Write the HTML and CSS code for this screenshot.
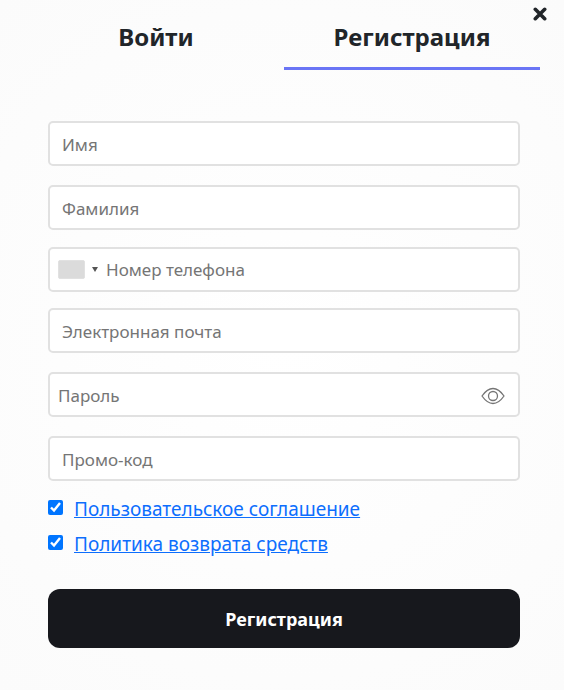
FILE: index.html
```
<!DOCTYPE html>
<html lang="ru">
<head>
    <meta charset="UTF-8">
    <meta name="viewport" content="width=device-width, initial-scale=1.0">
    <title>Регистрация</title>
    <link rel="stylesheet" href="styles.css">
</head>
<body>

<main class="modal">
    <button type="button" class="close-btn" aria-label="Закрыть">
        <svg viewBox="0 0 14 14" width="14" height="14">
            <path d="M2.3 2.3 L11.7 11.7 M11.7 2.3 L2.3 11.7"/>
        </svg>
    </button>

    <div class="tabs">
        <button type="button" class="tab">Войти</button>
        <button type="button" class="tab active">Регистрация</button>
    </div>

    <form class="register-form">
        <input type="text" class="field" name="name" placeholder="Имя" aria-label="Имя">
        <input type="text" class="field" name="surname" placeholder="Фамилия" aria-label="Фамилия">

        <div class="field phone-field">
            <button type="button" class="country-btn" aria-label="Код страны">
                <span class="flag"></span>
                <span class="arrow"></span>
            </button>
            <input type="tel" class="inner-input" name="phone" placeholder="Номер телефона" aria-label="Номер телефона">
        </div>

        <input type="email" class="field email-field" name="email" placeholder="Электронная почта" aria-label="Электронная почта">

        <div class="field password-field">
            <input type="password" class="inner-input" name="password" placeholder="Пароль" aria-label="Пароль">
            <button type="button" class="eye-btn" aria-label="Показать пароль">
                <svg viewBox="0 0 24 18" width="24" height="18">
                    <path d="M1 9 C4.5 4 8 1.5 12 1.5 S19.5 4 23 9 C19.5 14 16 16.5 12 16.5 S4.5 14 1 9 Z"/>
                    <circle cx="12" cy="9" r="4.5"/>
                </svg>
            </button>
        </div>

        <input type="text" class="field" name="promo" placeholder="Промо-код" aria-label="Промо-код">

        <div class="agreements">
            <div class="agreement">
                <input type="checkbox" class="check" id="terms" aria-labelledby="termsLink" checked>
                <a href="#" id="termsLink">Пользовательское соглашение</a>
            </div>
            <div class="agreement">
                <input type="checkbox" class="check" id="refund" aria-labelledby="refundLink" checked>
                <a href="#" id="refundLink">Политика возврата средств</a>
            </div>
        </div>

        <button type="submit" class="submit-btn">Регистрация</button>
    </form>
</main>

</body>
</html>
```
FILE: styles.css
```
* {
    box-sizing: border-box;
}

body {
    margin: 0;
    min-height: 100vh;
    font-family: "Segoe UI", "Noto Sans", sans-serif;
    color: #212529;
    background: radial-gradient(circle at center, #ffffff, #fbfbfb);
}

button {
    padding: 0;
    border: none;
    background: none;
    color: inherit;
    font-family: inherit;
    cursor: pointer;
}

svg {
    display: block;
    fill: none;
}

.modal {
    position: relative;
    padding: 5px 24px 40px 28px;
}

.close-btn {
    position: absolute;
    top: 7px;
    right: 17px;
}

.close-btn svg {
    stroke: #212529;
    stroke-width: 3.6;
    stroke-linecap: round;
}

/* Tabs */
.tabs {
    display: grid;
    grid-template-columns: 1fr 1fr;
}

.tab {
    height: 65px;
    border-bottom: 3px solid transparent;
    font-size: 24px;
    font-weight: bold;
}

.tab.active {
    border-bottom-color: #6a75f5;
}

/* Form */
.register-form {
    padding: 51px 20px 0;
}

.field {
    display: flex;
    align-items: center;
    width: 100%;
    height: 45px;
    margin: 0 0 19px;
    padding: 2px 12px 0;
    border: 2px solid #e1e1e1;
    border-radius: 5px;
    background-color: white;
    font-family: inherit;
    font-size: 17px;
}

.field::placeholder,
.inner-input::placeholder {
    color: #757575;
    opacity: 1;
}

.inner-input {
    flex: 1;
    min-width: 0;
    padding: 0;
    border: none;
    background: none;
    font-family: inherit;
    font-size: 17px;
}

.phone-field {
    margin: -2px 0 16px;
    padding: 0 12px 0 8px;
}

.password-field {
    padding: 2px 13px 0 8px;
}

.country-btn {
    display: flex;
    align-items: center;
    gap: 7px;
    margin-right: 8px;
}

.flag {
    width: 27px;
    height: 19px;
    border: 1px solid #e1e1e1;
    border-radius: 2px;
    background-color: #dbdbdb;
}

.arrow {
    border-left: 3px solid transparent;
    border-right: 3px solid transparent;
    border-top: 5px solid #555;
}

.eye-btn svg {
    stroke: #757575;
    stroke-width: 1.3;
}

.agreements {
    display: grid;
    gap: 8px;
    margin-top: -4px;
}

.agreement {
    display: flex;
    gap: 11px;
    font-size: 19px;
    line-height: 27px;
}

.agreement a {
    color: #0d6efd;
}

.check {
    width: 15px;
    height: 15px;
    margin: 4px 0 0;
    accent-color: #0075ff;
}

.submit-btn {
    width: 100%;
    height: 59px;
    margin-top: 31px;
    border-radius: 12px;
    background-color: #17181d;
    color: white;
    font-size: 18px;
    font-weight: bold;
}
```
